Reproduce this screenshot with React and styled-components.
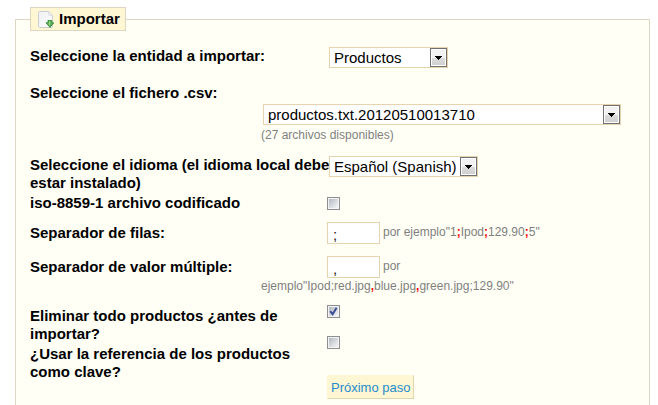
import React, { useState } from "react";
import styled, { createGlobalStyle } from "styled-components";

const App = () => {
  const [options, setOptions] = useState({ iso: false, truncate: true, matchRef: false });

  const toggle = (e) => {
    setOptions({ ...options, [e.target.id]: e.target.checked });
  };

  return (
    <>
      <GlobalStyle />
      <Form onSubmit={(e) => e.preventDefault()}>
        <Panel>
          <Legend>
            <ImportIcon />
            Importar
          </Legend>

          <Row $label={299} $space={16}>
            <Label htmlFor="entity">Seleccione la entidad a importar:</Label>
            <SelectField id="entity" $width="119px" options={["Productos"]} />
          </Row>

          <Label htmlFor="csv">Seleccione el fichero .csv:</Label>
          <FileField>
            <SelectField id="csv" $width="100%" options={["productos.txt.20120510013710"]} />
          </FileField>
          <FileHint>(27 archivos disponibles)</FileHint>

          <Row $label={299} $space={2}>
            <Label htmlFor="lang" $nowrap>
              Seleccione el idioma (el idioma local debe
              <br />
              estar instalado)
            </Label>
            <SelectField id="lang" $width="149px" options={["Español (Spanish)"]} />
          </Row>

          <Row $label={297} $space={10}>
            <Label htmlFor="iso">iso-8859-1 archivo codificado</Label>
            <Checks $top={3}>
              <CheckField id="iso" checked={options.iso} onChange={toggle} />
            </Checks>
          </Row>

          <SeparatorRow $label={231} $space={12}>
            <Label htmlFor="separator">Separador de filas:</Label>
            <Field>
              <TextInput id="separator" defaultValue=";" />
              <Hint>
                por ejemplo"1<b>;</b>Ipod<b>;</b>129.90<b>;</b>5"
              </Hint>
            </Field>
          </SeparatorRow>

          <SeparatorRow $label={231} $space={11}>
            <Label htmlFor="multiple">Separador de valor múltiple:</Label>
            <Field>
              <TextInput id="multiple" defaultValue="," />
              <Hint>
                por
                <br />
                ejemplo"Ipod;red.jpg<b>,</b>blue.jpg<b>,</b>green.jpg;129.90"
              </Hint>
            </Field>
          </SeparatorRow>

          <Row $label={297} $space={0}>
            <Labels>
              <Label htmlFor="truncate">Eliminar todo productos ¿antes de importar?</Label>
              <Label htmlFor="matchRef">
                ¿Usar la referencia de los productos como clave?
              </Label>
            </Labels>
            <Checks $top={0}>
              <CheckField id="truncate" checked={options.truncate} onChange={toggle} />
              <CheckField id="matchRef" checked={options.matchRef} onChange={toggle} />
              <Actions>
                <Button type="submit">Próximo paso</Button>
              </Actions>
            </Checks>
          </Row>
        </Panel>
      </Form>
    </>
  );
};

const SelectField = ({ id, options, $width }) => (
  <SelectWrap $width={$width}>
    <Select id={id}>
      {options.map((option) => (
        <option key={option}>{option}</option>
      ))}
    </Select>
    <Arrow>
      <svg width="7" height="4" viewBox="0 0 7 4" shapeRendering="crispEdges">
        <path d="M0 0h7v1H6v1H5v1H4v1H3V3H2V2H1V1H0z" />
      </svg>
    </Arrow>
  </SelectWrap>
);

const CheckField = ({ id, checked, onChange }) => (
  <CheckWrap>
    <Checkbox type="checkbox" id={id} checked={checked} onChange={onChange} />
    <svg width="13" height="13" viewBox="0 0 13 13" aria-hidden="true">
      <path d="M3.2 6.2 5.6 9.2 9.6 2.8" fill="none" stroke="#3a4f96" strokeWidth="2" />
    </svg>
  </CheckWrap>
);

const ImportIcon = () => (
  <svg width="16" height="17" viewBox="0 0 16 17" aria-hidden="true">
    <defs>
      <linearGradient id="sheet" x1="0" y1="0" x2="1" y2="1">
        <stop offset="0" stopColor="#eef0f2" />
        <stop offset="1" stopColor="#ffffff" />
      </linearGradient>
    </defs>
    <path
      d="M1.5 .5h9.2l3.8 3.8v11.2q0 1-1 1h-12q-1 0-1-1v-14q0-1 1-1z"
      fill="url(#sheet)"
      stroke="#cbcdd0"
    />
    <path d="M10.7 .8v3.5h3.5z" fill="#fff" stroke="#d2d4d6" strokeWidth=".8" />
    <path
      d="M10 9.5h3.8v2.3h1.9L12 16.4l-3.9-4.6H10z"
      fill="#62b55b"
      stroke="#328738"
      strokeWidth=".9"
    />
    <path d="M11.5 10.3v3.5" stroke="#a3dc95" />
  </svg>
);

const GlobalStyle = createGlobalStyle`
  * {
    box-sizing: border-box;
  }

  body {
    margin: 0;
    background: #fff;
    color: #000;
    font-family: "Liberation Sans", Arial, sans-serif;
    font-size: 15px;
    line-height: 18px;
  }
`;

const Form = styled.form`
  padding: 7px 8px 8px 15px;
`;

const Panel = styled.fieldset`
  margin: 0;
  min-width: 0;
  padding: 16px 14px 24px;
  background: #fffff6;
  border: 1px solid #dfd5c3;
`;

const Legend = styled.legend`
  display: flex;
  align-items: center;
  gap: 5px;
  height: 24px;
  padding: 0 5px 0 7px;
  background: #fff6d3;
  border: 1px solid #dfd5c3;
  font-weight: bold;
`;

const Row = styled.div`
  display: grid;
  grid-template-columns: ${(props) => props.$label}px 1fr;
  align-items: start;
  margin-bottom: ${(props) => props.$space}px;
`;

const SeparatorRow = styled(Row)`
  > label {
    padding-top: 2px;
  }
`;

const Label = styled.label`
  display: block;
  font-weight: bold;
  white-space: ${(props) => (props.$nowrap ? "nowrap" : "normal")};
`;

const Labels = styled.div`
  display: grid;
  gap: 2px;
  padding-top: 2px;
`;

const FileField = styled.div`
  padding: 2px 14px 0 233px;
`;

const SelectWrap = styled.div`
  display: grid;
  width: ${(props) => props.$width};
`;

const Select = styled.select`
  grid-area: 1 / 1;
  appearance: none;
  width: 100%;
  height: 21px;
  margin: 0;
  padding: 0 18px 0 4px;
  background: #fff;
  border: 1px solid #e6d3b0;
  border-radius: 0;
  color: #000;
  font: inherit;
`;

const Arrow = styled.span`
  grid-area: 1 / 1;
  justify-self: end;
  display: grid;
  place-items: center;
  width: 17px;
  height: 19px;
  margin: 1px;
  background: linear-gradient(#f2f2f2 50%, #dddddd 50%, #cfcfcf);
  border: 1px solid #707070;
  box-shadow: inset 0 0 0 1px #fff;
  pointer-events: none;
`;

const Hint = styled.span`
  color: #7f7f7f;
  font-size: 12px;

  b {
    color: #f00;
  }
`;

const FileHint = styled(Hint)`
  display: block;
  padding: 1px 0 12px 231px;
`;

const Field = styled.div`
  font-size: 12px;
  line-height: 16px;
  text-indent: 66px;
`;

const TextInput = styled.input`
  width: 53px;
  height: 22px;
  margin: 0 3px 0 0;
  padding: 2px 5px 0;
  background: #fff;
  border: 1px solid #e6d3b0;
  color: #222;
  font-family: inherit;
  font-size: 15px;
  text-indent: 0;
  vertical-align: middle;
`;

const Checks = styled.div`
  display: grid;
  gap: 18px;
  padding-top: ${(props) => props.$top}px;
`;

const CheckWrap = styled.span`
  display: grid;
  width: 13px;
  height: 13px;

  svg {
    grid-area: 1 / 1;
    visibility: hidden;
    pointer-events: none;
  }

  input:checked + svg {
    visibility: visible;
  }
`;

const Checkbox = styled.input`
  grid-area: 1 / 1;
  appearance: none;
  width: 13px;
  height: 13px;
  margin: 0;
  padding: 1px;
  background: linear-gradient(135deg, #b4bac2, #f6f6f6) content-box, #f4f4f4;
  border: 1px solid #8e8f8f;
`;

const Actions = styled.div`
  display: flex;
  padding-top: 8px;
`;

const Button = styled.button`
  height: 24px;
  padding: 0 3px;
  background: #fff6d3;
  border: 1px solid #fff6d3;
  border-right-color: #dfd5af;
  border-bottom-color: #dfd5af;
  color: #268ccd;
  font-family: inherit;
  font-size: 13px;
  cursor: pointer;
`;

export default App;
